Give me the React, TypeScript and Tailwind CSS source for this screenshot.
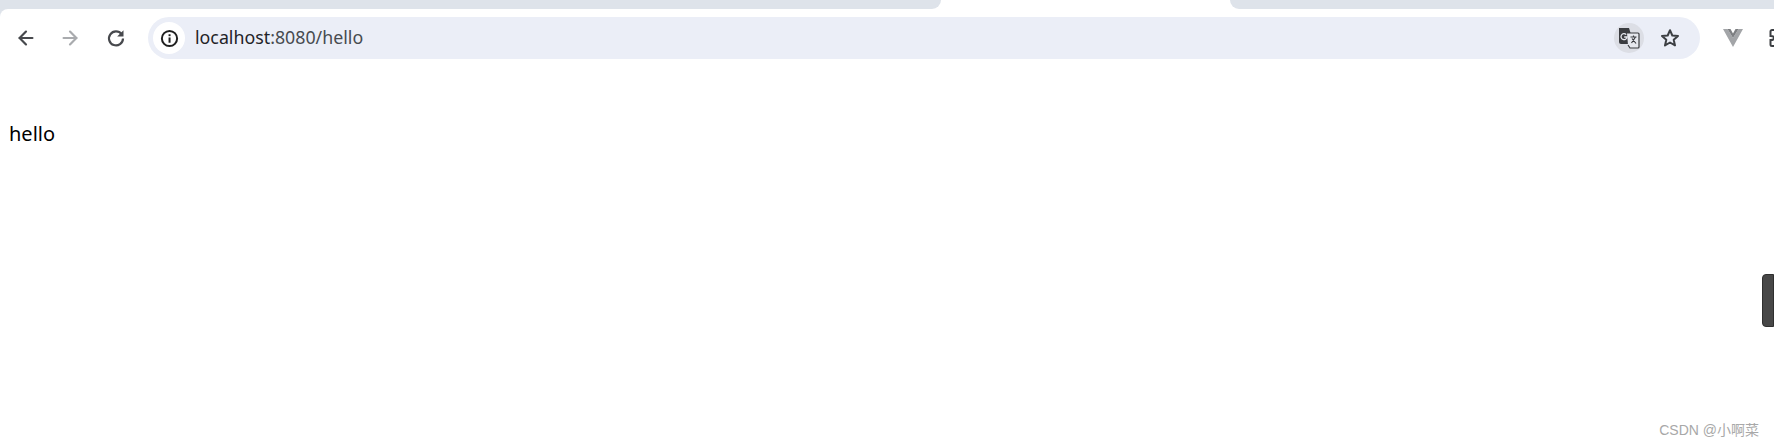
import { ArrowLeft, ArrowRight } from 'lucide-react';

const ReloadIcon = () => (
  <svg width="20" height="20" viewBox="0 0 20 20" fill="none">
    <path d="M15.600 6.200A7 7 0 1 0 17 10.500" stroke="#47494d" strokeWidth="2.200" />
    <path d="M17.500 2.200v6.300h-6.300z" fill="#47494d" />
  </svg>
);

const InfoIcon = () => (
  <svg width="19" height="19" viewBox="0 0 18 18" fill="none">
    <circle cx="9" cy="9" r="7.2" stroke="#1f1f1f" strokeWidth="1.9" />
    <rect x="8.100" y="8" width="1.900" height="5" fill="#1f1f1f" />
    <rect x="8.100" y="5" width="1.900" height="1.800" fill="#1f1f1f" />
  </svg>
);

const StarIcon = () => (
  <svg width="22" height="22" viewBox="0 0 22 22" fill="none">
    <path
      d="M11 3.200l2.300 5.300 5.700.5-4.300 3.800 1.300 5.600L11 15.500l-5 2.900 1.300-5.600L3 9l5.700-.5z"
      stroke="#3c3f43"
      strokeWidth="2"
      strokeLinejoin="round"
    />
  </svg>
);

const TranslateIcon = () => (
  <div className="flex h-[30px] w-[30px] items-center justify-center rounded-full bg-[#dcdee5]">
    <svg width="22" height="22" viewBox="0 0 22 22" fill="none">
      <path d="M1 1h10l5 16H3a2 2 0 0 1-2-2z" fill="#3a3c40" />
      <path d="M9 6h11a1 1 0 0 1 1 1v13a1 1 0 0 1-1 1h-8l-2-3" fill="#e6e8ee" stroke="#3a3c40" strokeWidth="1.2" />
      <path d="M8.200 7.600A3 3 0 1 0 9 10H6.200" stroke="#e6e8ee" strokeWidth="1.3" />
      <path d="M12.500 10h6M15.500 8.500V10M13.500 16l4-6M14 11.500l4 5" stroke="#3a3c40" strokeWidth="1.2" />
    </svg>
  </div>
);

const VueIcon = () => (
  <svg width="20" height="18" viewBox="0 0 20 18">
    <path d="M0 0h4.500L10 9l5.500-9H20L10 18z" fill="#a3a5a8" />
    <path d="M4.500 0h3L10 4.500 12.500 0h3L10 9z" fill="#7d7f82" />
  </svg>
);

const PuzzleEdge = () => (
  <svg width="8" height="22" viewBox="0 0 8 22" fill="none">
    <path d="M6 3H3a1.500 1.500 0 0 0-1.500 1.500V9C4 9 5 10 5 11s-1 2-3.500 2v4.500A1.500 1.500 0 0 0 3 19h3" stroke="#3c3f43" strokeWidth="2" />
  </svg>
);

export default function App() {
  return (
    <div className="relative h-[446px] w-full overflow-hidden bg-white font-['Noto_Sans',sans-serif]">
      {/* tab strip, only the bottom edge of the tabs is visible */}
      <div className="flex h-[9px]">
        <div className="w-[941px] rounded-br-[14px] bg-[#dee3ea]" />
        <div className="w-[289px]" />
        <div className="flex-1 rounded-bl-[14px] bg-[#dee3ea]" />
      </div>

      <div className="bg-[#dee3ea]">
        <div className="flex h-[59px] items-start rounded-tl-[8px] bg-white">
          <div className="mt-[18px] flex h-[22px] items-center pl-[15px]">
            <ArrowLeft size={22} strokeWidth={2.400} color="#47494d" />
            <ArrowRight size={22} strokeWidth={2.400} color="#a9abae" className="ml-[22px]" />
            <div className="ml-[25px]">
              <ReloadIcon />
            </div>
          </div>

          <div className="ml-[22px] mt-[8px] flex h-[42px] w-[1552px] shrink-0 items-center rounded-full bg-[#ebeef7] pl-[5px] pr-[19px]">
            <div className="flex h-[32px] w-[32px] items-center justify-center rounded-full bg-white">
              <InfoIcon />
            </div>
            <div className="ml-[10px] flex-1 text-[17.8px] leading-none text-[#1f2328]">
              localhost<span className="text-[#474b50]">:8080/hello</span>
            </div>
            <TranslateIcon />
            <div className="ml-[15px]">
              <StarIcon />
            </div>
          </div>

          <div className="ml-[23px] mt-[20px]">
            <VueIcon />
          </div>
          <div className="ml-[26px] mt-[18px]">
            <PuzzleEdge />
          </div>
        </div>
      </div>

      <p className="mt-[53px] pl-[9px] text-[20px] leading-[26px] text-black">hello</p>

      {/* floating side handle from a browser extension */}
      <div className="absolute right-0 top-[274px] h-[53px] w-[12px] rounded-l-[4px] border border-[#2f2f2f] bg-[#474747]" />

      <div className="absolute right-[15px] top-[421px] font-['Liberation_Sans','Noto_Sans_CJK_SC',sans-serif] text-[14px] leading-[18px] text-[#a8a8a8]">
        CSDN @小啊菜
      </div>
    </div>
  );
}
